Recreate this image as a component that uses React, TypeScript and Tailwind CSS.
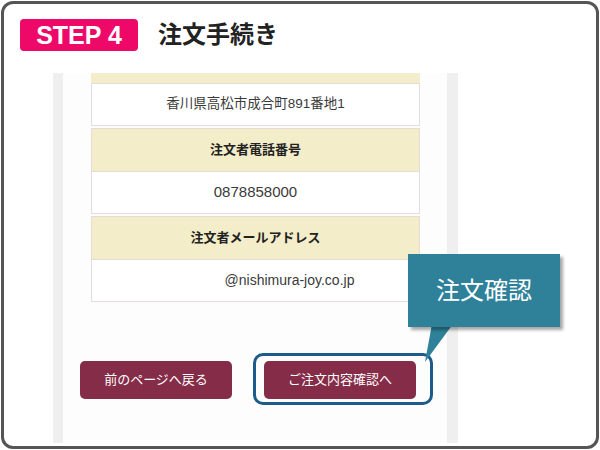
const jp = "font-['Liberation_Sans','Noto_Sans_CJK_JP',sans-serif]";

type Row = { label: string; value: string; valueClass?: string };

const rows: Row[] = [
  { label: "注文者電話番号", value: "0878858000", valueClass: "text-[15px]" },
  {
    label: "注文者メールアドレス",
    value: "@nishimura-joy.co.jp",
    valueClass: "text-[14px] pl-[68px]",
  },
];

function InfoGroup({ label, value, valueClass }: Row) {
  return (
    <div className="flex flex-col">
      <div className="flex h-[44px] items-center justify-center border border-[#e4dcd6] bg-[#f3edc9] text-[13px] font-bold text-[#222]">
        {label}
      </div>
      <div
        className={`flex h-[42px] items-center justify-center border border-t-0 border-[#e6dcde] bg-white text-[#3a3a3a] ${valueClass ?? "text-[13px]"}`}
      >
        {value}
      </div>
    </div>
  );
}

export default function App() {
  return (
    <div className={`relative h-[450px] w-[600px] bg-white p-[1px] ${jp}`}>
      <div className="flex h-full flex-col rounded-[12px] border-[3px] border-[#555] bg-white">
        {/* step heading */}
        <div className="flex items-center pl-[16px] pt-[15px]">
          <div className="flex h-[32px] w-[118px] items-center justify-center rounded-[4px] bg-[#ee0868] font-['Liberation_Sans',sans-serif] text-[25px] font-bold leading-none text-white">
            STEP 4
          </div>
          <div className="ml-[20px] text-[24px] font-bold leading-none text-[#222]">注文手続き</div>
        </div>

        {/* captured page */}
        <div className="ml-[49px] mt-[22px] mb-[3px] flex w-[405px] flex-1 overflow-hidden">
          <div className="w-[10px] bg-[#efefef]" />
          <div className="w-[384px] bg-[#fdfdfd] pl-[28px]">
            <div className="flex w-[329px] flex-col gap-[2px]">
              <div className="flex flex-col">
                <div className="h-[11px] border-b border-[#e4dcd6] bg-[#f3edc9]" />
                <div className="flex h-[42px] items-center justify-center border border-t-0 border-[#e6dcde] bg-white text-[13.5px] text-[#3a3a3a]">
                  香川県高松市成合町891番地1
                </div>
              </div>
              {rows.map((r) => (
                <InfoGroup key={r.label} {...r} />
              ))}
            </div>

            <div className="-ml-[11px] mt-[59px] flex gap-[32px]">
              <button className="h-[38px] w-[152px] rounded-[5px] bg-[#852c48] text-[13px] text-white">
                前のページへ戻る
              </button>
              <button className="h-[38px] w-[152px] rounded-[5px] bg-[#852c48] text-[13px] text-white">
                ご注文内容確認へ
              </button>
            </div>
          </div>
          <div className="w-[11px] bg-[#efefef]" />
        </div>
      </div>

      {/* highlight around the confirm button */}
      <div className="absolute left-[253px] top-[353px] h-[52px] w-[180px] rounded-[10px] border-[3px] border-[#1d5b8a]" />

      {/* callout */}
      <svg className="absolute left-[420px] top-[324px]" width="40" height="40" viewBox="0 0 40 40">
        <polygon points="12,0 33,0 5,38" fill="#2e8199" />
      </svg>
      <div className="absolute left-[408px] top-[254px] flex h-[73px] w-[152px] items-center justify-center bg-[#2e8199] text-[24px] text-white shadow-[3px_3px_3px_rgba(0,0,0,0.35)]">
        注文確認
      </div>
    </div>
  );
}
